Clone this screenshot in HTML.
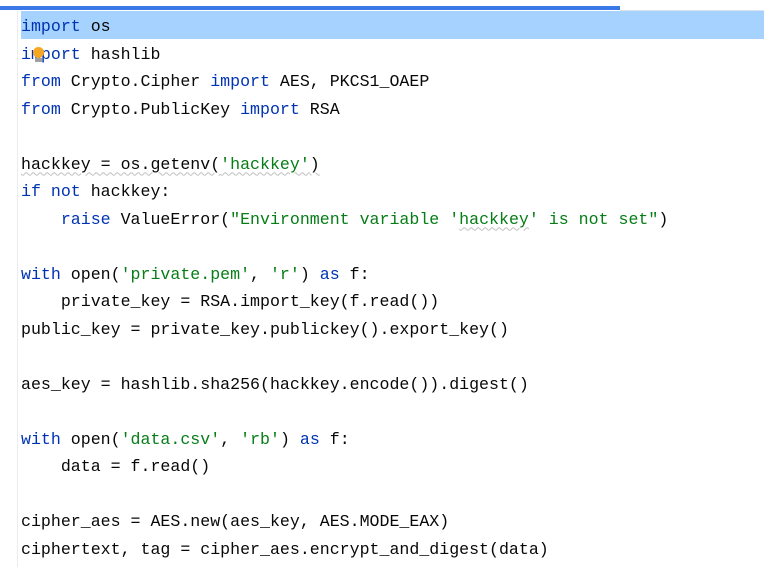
<!DOCTYPE html>
<html><head><meta charset="utf-8"><style>
html,body{margin:0;padding:0;background:#fff;width:764px;height:567px;overflow:hidden;position:relative}
.bar{position:absolute;left:0;top:6px;width:620px;height:4px;background:#3b78e7}
.bar2{position:absolute;left:620px;top:10px;width:144px;height:1px;background:#dde3ee}
.hl{position:absolute;left:21px;top:11px;right:0;height:28px;background:#a6d2ff}
.gut{position:absolute;left:17px;top:11px;width:1px;height:556px;background:#ebecf0}
pre{position:absolute;left:21px;top:13px;margin:0;font-family:"Liberation Mono",monospace;font-size:16.6px;line-height:27.5px;color:#080808}
.k{color:#0033b3}.s{color:#067d17}
.w{text-decoration:underline wavy #c0c0c0;text-decoration-thickness:1px;text-underline-offset:3px}
.bulb{position:absolute;left:33px;top:47px;width:11px;height:11px;border-radius:50%;background:#f5a623}
.bulb2{position:absolute;left:35px;top:58px;width:7px;height:4px;background:#a0a0a0}
</style></head><body>
<div class="bar"></div><div class="bar2"></div>
<div class="hl"></div><div class="gut"></div>
<pre><span class="k">import</span> os
<span class="k">import</span> hashlib
<span class="k">from</span> Crypto.Cipher <span class="k">import</span> AES, PKCS1_OAEP
<span class="k">from</span> Crypto.PublicKey <span class="k">import</span> RSA

<span class="w">hackkey = os.getenv(<span class="s">'hackkey'</span>)</span>
<span class="k">if not</span> hackkey:
    <span class="k">raise</span> ValueError(<span class="s">"Environment variable '<span class="w">hackkey</span>' is not set"</span>)

<span class="k">with</span> open(<span class="s">'private.pem'</span>, <span class="s">'r'</span>) <span class="k">as</span> f:
    private_key = RSA.import_key(f.read())
public_key = private_key.publickey().export_key()

aes_key = hashlib.sha256(hackkey.encode()).digest()

<span class="k">with</span> open(<span class="s">'data.csv'</span>, <span class="s">'rb'</span>) <span class="k">as</span> f:
    data = f.read()

cipher_aes = AES.new(aes_key, AES.MODE_EAX)
ciphertext, tag = cipher_aes.encrypt_and_digest(data)</pre>
<div class="bulb"></div><div class="bulb2"></div>
</body></html>
